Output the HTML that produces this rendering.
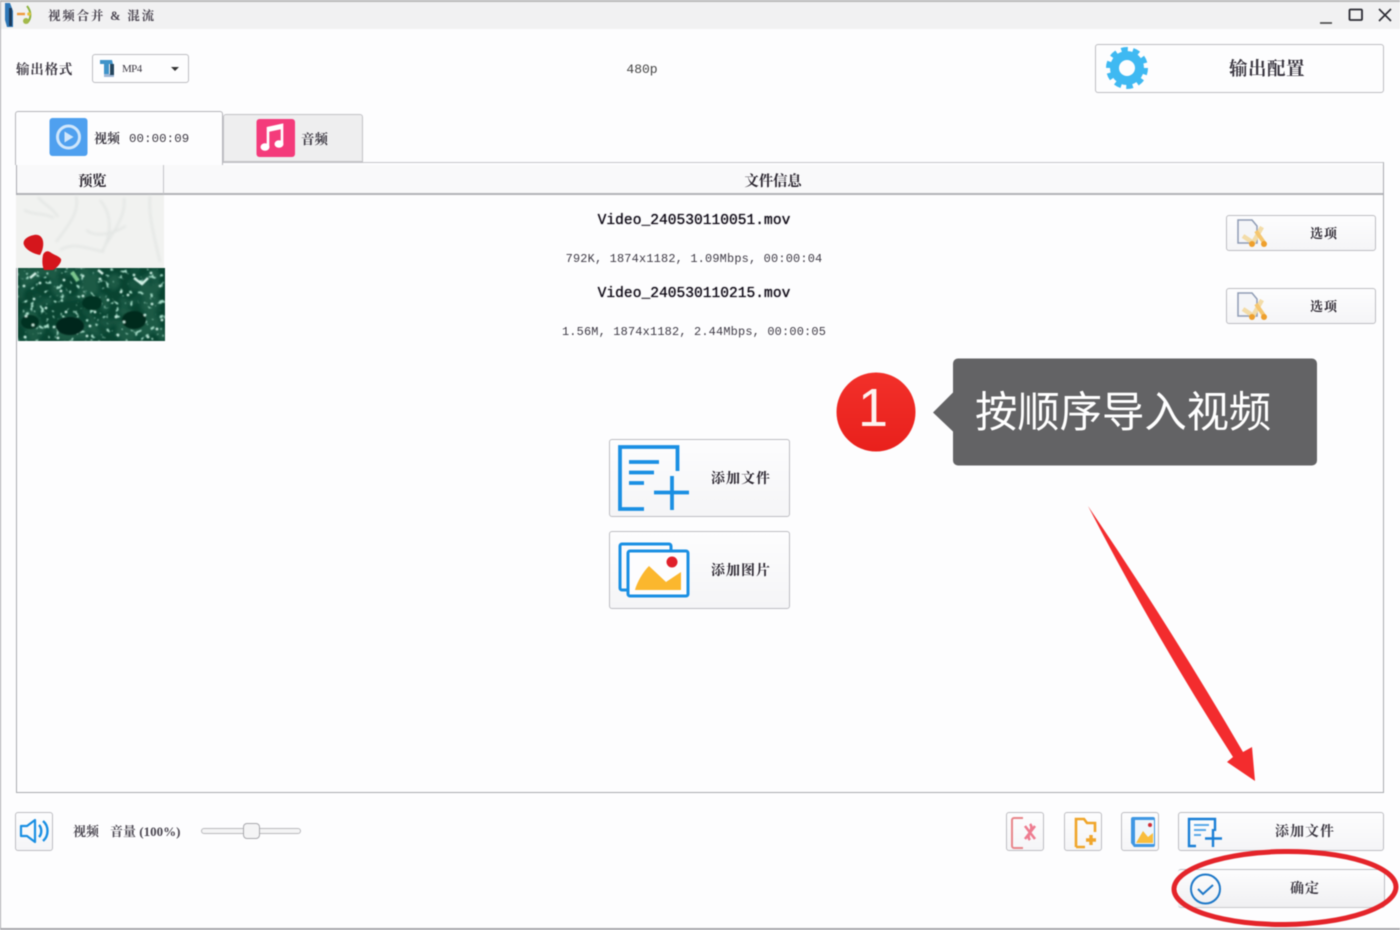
<!DOCTYPE html>
<html lang="zh"><head><meta charset="utf-8"><title>视频合并 &amp; 混流</title>
<style>
html,body{margin:0;padding:0;background:#fdfdfe}
#p{position:relative;width:1400px;height:930px;overflow:hidden;background:#fdfdfe;font-family:"Liberation Sans","Noto Sans CJK SC",sans-serif;color:#2b2630;filter:blur(.4px)}
#p div,#p span{position:absolute;box-sizing:border-box}
.t{white-space:nowrap;line-height:1;font-family:"Liberation Serif","Noto Serif CJK SC",serif;transform:translateX(-50%)}
.l{transform:none}
.m{font-family:"Liberation Mono","Noto Serif CJK SC",monospace}
.b{border:1px solid #bdbdc2;border-radius:3px;background:linear-gradient(#fdfdfe,#f5f5f7)}
svg{position:absolute;left:0;top:0}
</style></head><body><div id="p">
<div style="left:0;top:0;width:1400px;height:2px;background:#b9b9b9"></div>
<div style="left:0;top:2px;width:1400px;height:27px;background:#f1f1f2"></div>
<div style="left:0;top:0;width:1px;height:930px;background:#a9a9ad"></div>
<div style="left:0;top:928px;width:1400px;height:2px;background:#a9a9ad"></div>

<span class="t l" style="left:48px;top:10px;font-size:12.5px;letter-spacing:1.800px;font-weight:700;color:#4a4550">视频合并 &amp; 混流</span>
<span class="t l" style="left:16px;top:63px;font-size:13.5px;letter-spacing:.8px;font-weight:700;color:#3c3842">输出格式</span>
<div class="b" style="left:92px;top:54px;width:97px;height:29px;background:#fdfdfe"></div>
<span class="t l" style="left:122px;top:64px;font-size:11px;letter-spacing:-.6px;color:#3c3842">MP4</span>
<span class="t m" style="left:642px;top:63px;font-size:13px;color:#444">480p</span>
<div class="b" style="left:1095px;top:44px;width:289px;height:49px;background:#fdfdfe"></div>
<span class="t" style="left:1267px;top:61px;font-size:18.500px;letter-spacing:.5px;font-weight:700;color:#38343e">输出配置</span>

<div style="left:16px;top:162px;width:1368px;height:631px;border:1px solid #a9abb0;border-top:1px solid #c6c6ca;background:#fdfdfe"></div>
<div style="left:17px;top:165px;width:1366px;height:30px;background:#f9f9fa;border-bottom:2px solid #b2b3b7"></div>
<div style="left:163px;top:165px;width:1px;height:29px;background:#c4c4c8"></div>

<div style="left:223px;top:114px;width:140px;height:49px;background:#eeeeef;border:1px solid #c2c2c6;border-bottom:2px solid #c2c2c6;border-radius:3px 3px 0 0"></div>
<div style="left:15px;top:111px;width:208px;height:54px;background:#fdfdfe;border:1px solid #b5b5ba;border-bottom:0;border-radius:3px 3px 0 0"></div>
<span class="t l" style="left:94px;top:132px;font-size:13px;font-weight:700;color:#3c3842">视频</span>
<span class="t l m" style="left:129px;top:133px;font-size:12.400px;letter-spacing:.1px;color:#3c3842">00:00:09</span>
<span class="t l" style="left:301px;top:133px;font-size:13.5px;font-weight:700;color:#3c3842">音频</span>

<span class="t" style="left:92px;top:175px;font-size:14.5px;font-weight:700;letter-spacing:-.5px">预览</span>
<span class="t" style="left:773px;top:175px;font-size:14.5px;font-weight:700;letter-spacing:-.2px">文件信息</span>

<span class="t m" style="left:694px;top:214px;font-size:14.6px;color:#0d0814;text-shadow:0 0 .8px #0d0814">Video_240530110051.mov</span>
<span class="t m" style="left:694px;top:254px;font-size:11.900px;letter-spacing:.2px;color:#3f3b46">792K, 1874x1182, 1.09Mbps, 00:00:04</span>
<span class="t m" style="left:694px;top:287px;font-size:14.6px;color:#0d0814;text-shadow:0 0 .8px #0d0814">Video_240530110215.mov</span>
<span class="t m" style="left:694px;top:327px;font-size:11.900px;letter-spacing:.2px;color:#3f3b46">1.56M, 1874x1182, 2.44Mbps, 00:00:05</span>

<div class="b" style="left:1226px;top:215px;width:150px;height:36px"></div>
<div class="b" style="left:1226px;top:288px;width:150px;height:36px"></div>
<span class="t" style="left:1324px;top:227px;font-size:13px;font-weight:700;letter-spacing:1px">选项</span>
<span class="t" style="left:1324px;top:300px;font-size:13px;font-weight:700;letter-spacing:1px">选项</span>

<div class="b" style="left:609px;top:439px;width:181px;height:78px"></div>
<div class="b" style="left:609px;top:531px;width:181px;height:78px"></div>
<span class="t" style="left:741px;top:473px;font-size:14px;font-weight:700;letter-spacing:1px">添加文件</span>
<span class="t" style="left:741px;top:565px;font-size:14px;font-weight:700;letter-spacing:1px">添加图片</span>

<div class="b" style="left:15px;top:812px;width:38px;height:39px"></div>
<span class="t l" style="left:73px;top:825px;font-size:13px;font-weight:700;color:#4a4650">视频</span>
<span class="t l" style="left:110px;top:825px;font-size:13px;font-weight:700;color:#4a4650">音量 (100%)</span>
<div style="left:201px;top:828px;width:100px;height:6px;border:1px solid #b9b9bd;border-radius:3px;background:#f4f4f5"></div>
<div style="left:243px;top:823px;width:17px;height:16px;border:1px solid #a9a9ad;border-radius:4px;background:#f4f4f5"></div>

<div class="b" style="left:1006px;top:812px;width:38px;height:39px"></div>
<div class="b" style="left:1064px;top:812px;width:38px;height:39px"></div>
<div class="b" style="left:1121px;top:812px;width:38px;height:39px"></div>
<div class="b" style="left:1178px;top:812px;width:206px;height:39px"></div>
<span class="t" style="left:1305px;top:826px;font-size:14px;font-weight:700;letter-spacing:1px;color:#3c3842">添加文件</span>

<div class="b" style="left:1178px;top:869px;width:207px;height:39px;border-left:0;border-bottom-color:#c9c9cd;background:linear-gradient(#fdfdfe,#f0f0f2)"></div>
<span class="t" style="left:1305px;top:883px;font-size:14px;font-weight:700;letter-spacing:1px;color:#3c3842">确定</span>

<svg width="1400" height="930" viewBox="0 0 1400 930" fill="none">
<defs>
<linearGradient id="red" x1="0" y1="0" x2="0" y2="1"><stop offset="0" stop-color="#f2302a"/><stop offset="1" stop-color="#e9201c"/></linearGradient>
<filter id="b1" x="-10%" y="-10%" width="120%" height="120%"><feGaussianBlur stdDeviation="1.200"/></filter>
<filter id="b2" x="-10%" y="-10%" width="120%" height="120%"><feGaussianBlur stdDeviation=".6"/></filter>
<filter id="n1" x="0" y="0" width="1" height="1"><feTurbulence type="fractalNoise" baseFrequency=".2" numOctaves="2" seed="4"/><feColorMatrix values="0 0 0 0 .38  0 0 0 0 .72  0 0 0 0 .58  10 0 0 0 -6.300"/><feGaussianBlur stdDeviation=".5"/></filter>
<filter id="n2" x="0" y="0" width="1" height="1"><feTurbulence type="fractalNoise" baseFrequency=".05" numOctaves="2" seed="9"/><feColorMatrix values="0 0 0 0 .01  0 0 0 0 .1  0 0 0 0 .06  8 0 0 0 -3.600"/><feGaussianBlur stdDeviation="1.500"/></filter>
<clipPath id="gc"><rect x="18" y="268" width="147" height="73"/></clipPath>
</defs>

<!-- app icon -->
<path d="M5 3h5l3 8v16H7L5 20z" fill="#2f78b8"/><path d="M9 8h3v18H9z" fill="#1a3a5c"/>
<path d="M17 14h8" stroke="#ef9a3a" stroke-width="2.400"/>
<path d="M27 6c4 5 5 12 0 17" stroke="#8db33f" stroke-width="2"/><circle cx="26" cy="21" r="3" fill="#a3b94a"/><circle cx="29" cy="14" r="1.800" fill="#e8c23a"/>
<!-- window controls -->
<path d="M1320 23h12" stroke="#444" stroke-width="1.600"/>
<rect x="1349.500" y="9.500" width="12.500" height="10.500" rx="1" stroke="#2b2b33" stroke-width="1.800"/>
<path d="M1379 9l12 12M1391 9l-12 12" stroke="#2b2b33" stroke-width="1.600"/>
<!-- mp4 icon -->
<path d="M100 60h12l1 4h-4v10h-5V64h-4z" fill="#3f93c9"/><path d="M104 74h10v3h-10z" fill="#9fb7d6"/><path d="M110 64h4v11h-4z" fill="#24465f"/>
<path d="M171 67h8l-4 4z" fill="#333"/>
<!-- gear -->
<circle cx="1127" cy="68" r="17" fill="#3fb9f2"/>
<circle cx="1127" cy="68" r="18.500" stroke="#3fb9f2" stroke-width="5" stroke-dasharray="6.500 5.120" stroke-linejoin="round"/>
<circle cx="1127" cy="68" r="8" fill="#fdfdfe"/>
<!-- tab icons -->
<rect x="49.500" y="118" width="38" height="38" rx="3" fill="#4fa0ef"/>
<circle cx="68.500" cy="137" r="11" stroke="#cfe6fb" stroke-width="3"/>
<path d="M64.500 131.500l9 5.500-9 5.500z" fill="#cfe6fb"/>
<rect x="256.500" y="119" width="38.500" height="38" rx="3" fill="#f43b7b"/>
<path d="M268 147v-19l14-3v18" stroke="#fff" stroke-width="2.600"/><path d="M268 128l14-3v4l-14 3z" fill="#fff"/>
<ellipse cx="265" cy="147" rx="4.500" ry="3.700" fill="#fff"/><ellipse cx="279" cy="144" rx="4.500" ry="3.700" fill="#fff"/>
<!-- thumbnails -->
<rect x="16" y="195" width="148" height="73" fill="#f1f2f0"/>
<path d="M38 197c6 8 14 10 20 20M76 196c4 16-8 30-20 46M100 200c10 12 14 30 2 52M124 198c2 14-6 28-18 46M150 196c-2 18 4 40 10 66M60 250c14-8 26-2 44 2M24 210c12 6 18 2 30 8M86 230c10 8 26 4 40-4" stroke="#e2e5e3" stroke-width="2" filter="url(#b1)"/>
<rect x="18" y="268" width="147" height="73" fill="#094431"/>
<rect x="18" y="268" width="147" height="73" filter="url(#n2)"/>
<rect x="18" y="268" width="147" height="73" filter="url(#n1)"/>
<g clip-path="url(#gc)" filter="url(#b2)">
<ellipse cx="70" cy="326" rx="14" ry="9" fill="#02251a"/><ellipse cx="134" cy="320" rx="12" ry="9" fill="#032a1d"/><ellipse cx="92" cy="303" rx="10" ry="7" fill="#043222"/><ellipse cx="30" cy="322" rx="9" ry="7" fill="#043222"/>
<path stroke="#c8eee0" stroke-width="2.800" stroke-linecap="round" d="M24 286h0M40 283h0M64 280h0M83 276h0M100 279h0M121 292h0M134 275h0M151 273h0M160 286h0M34 299h0M61 291h0M83 296h0M108 300h0M128 295h0M152 304h0M26 316h0M46 308h0M66 312h0M95 312h0M116 317h0M145 315h0M162 320h0M33 325h0M54 327h0M90 326h0M124 322h0M157 329h0M25 337h0M58 338h0M87 336h0M118 335h0M148 337h0"/>
<path d="M72 272l6 9" stroke="#7bc68e" stroke-width="4"/>
<path d="M134 278l8 6 6-6M36 273l-6 5M98 270l5 4" stroke="#d5f2e7" stroke-width="2.500"/>
</g>
<!-- hearts -->
<path d="M24 245C22 240 28 236 34 235 38 234 42 236 43 241 44 246 42 252 40 255 34 254 26 250 24 245z" fill="#d5161c"/>
<path d="M43 255C44 252 47 250 50 252 54 255 59 256 61 259 62 262 58 267 53 270L44 270C42 265 42 260 43 255z" fill="#d5161c"/>
<!-- option icons -->
<g><path d="M1238 220h14l5 6v17h-19z" fill="#f4f5f8" stroke="#8f9cb5" stroke-width="1.500"/><path d="M1243 236l12 8M1262 227l-8 14" stroke="#f3dca8" stroke-width="4.500"/><path d="M1256 231l9 13" stroke="#f5c66f" stroke-width="4"/><circle cx="1252" cy="244" r="3" fill="#ee9f2d"/><circle cx="1264" cy="244" r="3" fill="#ee9f2d"/></g>
<g transform="translate(0 73)"><path d="M1238 220h14l5 6v17h-19z" fill="#f4f5f8" stroke="#8f9cb5" stroke-width="1.500"/><path d="M1243 236l12 8M1262 227l-8 14" stroke="#f3dca8" stroke-width="4.500"/><path d="M1256 231l9 13" stroke="#f5c66f" stroke-width="4"/><circle cx="1252" cy="244" r="3" fill="#ee9f2d"/><circle cx="1264" cy="244" r="3" fill="#ee9f2d"/></g>
<!-- add file big -->
<path d="M644 509h-24v-62h57.500v24" stroke="#1a8fe3" stroke-width="3.800"/>
<path d="M629 462h30M629 472.500h25M629 483h15" stroke="#1a8fe3" stroke-width="3.800"/>
<path d="M672 476v34M654 492.500h35" stroke="#1a8fe3" stroke-width="3.800"/>
<!-- add picture big -->
<path d="M628 590h-6a2 2 0 0 1-2-2v-42a2 2 0 0 1 2-2h47a2 2 0 0 1 2 2v5" stroke="#1a8fe3" stroke-width="3"/>
<rect x="628" y="551" width="60" height="45" rx="2" fill="#fdfdfe" stroke="#1a8fe3" stroke-width="3"/>
<path d="M635 590c2-8 8-18 14-24l17 16 15-10v18z" fill="#fbb72e"/>
<circle cx="672" cy="562" r="5.500" fill="#e0202b"/>
<!-- speaker -->
<path d="M21 826h6l8-6v22l-8-6h-6z" stroke="#1a8fe3" stroke-width="2.200" stroke-linejoin="round"/>
<path d="M39 825c3 3 3 9 0 12M43 821c6 5 6 15 0 20" stroke="#1a8fe3" stroke-width="2.400"/>
<!-- small icon buttons -->
<path d="M1023 818h-9a2 2 0 0 0-2 2v26a2 2 0 0 0 2 2h9" stroke="#e8858a" stroke-width="2"/>
<path d="M1025 826l10 13M1035 826l-10 13M1030 824c5 5-5 11 0 16" stroke="#ee7c90" stroke-width="2.600"/>
<path d="M1076 847v-28h8l3 4h8v9M1076 847h9" stroke="#f0a52a" stroke-width="2.600"/>
<path d="M1091 835v10M1086 840h10" stroke="#f0a52a" stroke-width="3.400"/>
<path d="M1131 819a2 2 0 0 1 2-2h20a2 2 0 0 1 2 2v26a2 2 0 0 1-2 2h-19l-3-4z" fill="#3f97e3"/>
<rect x="1135" y="820" width="19" height="24" fill="#eef5fb"/>
<path d="M1136 843l7-12 5 6 5-4v10z" fill="#f9bd3c"/><circle cx="1150" cy="825" r="2" fill="#d12b35"/>
<path d="M1196 846h-7v-27h26v12" stroke="#1a7fd6" stroke-width="2.400"/>
<path d="M1194 825h15M1194 830h12M1194 835h7" stroke="#5aa8e8" stroke-width="2"/>
<path d="M1213 829v18M1205 838.500h17" stroke="#1a7fd6" stroke-width="2.400"/>
<!-- confirm -->
<circle cx="1205.500" cy="889" r="14.500" stroke="#1e78c8" stroke-width="2"/>
<path d="M1198 889l5 5 10-9" stroke="#1e78c8" stroke-width="2"/>
<!-- red arrow -->
<path d="M1088 506Q1172 630 1243 752L1252 747 1255 781 1227 762 1233 757Q1155 636 1088 506z" fill="#f32c2e"/>
<!-- oval -->
<ellipse cx="1285" cy="888" rx="111" ry="36.500" stroke="#e4242a" stroke-width="5" transform="rotate(-.6 1285 888)"/>
<!-- callout -->
<path d="M958 358.500h354a5 5 0 0 1 5 5v97a5 5 0 0 1-5 5H958a5 5 0 0 1-5-5v-29l-20-19 20-20v-29a5 5 0 0 1 5-5z" fill="#636365"/>
<circle cx="876" cy="412" r="39.500" fill="url(#red)"/>
</svg>

<span class="t" style="left:873px;top:381px;font-family:'Liberation Sans',sans-serif;font-size:54px;color:#fdf3f0;transform:translateX(-50%)">1</span>
<span class="t l" style="left:975px;top:393px;font-family:'Liberation Sans','Noto Sans CJK SC',sans-serif;font-size:42.500px;letter-spacing:-.2px;color:#fff">按顺序导入视频</span>
</div></body></html>
